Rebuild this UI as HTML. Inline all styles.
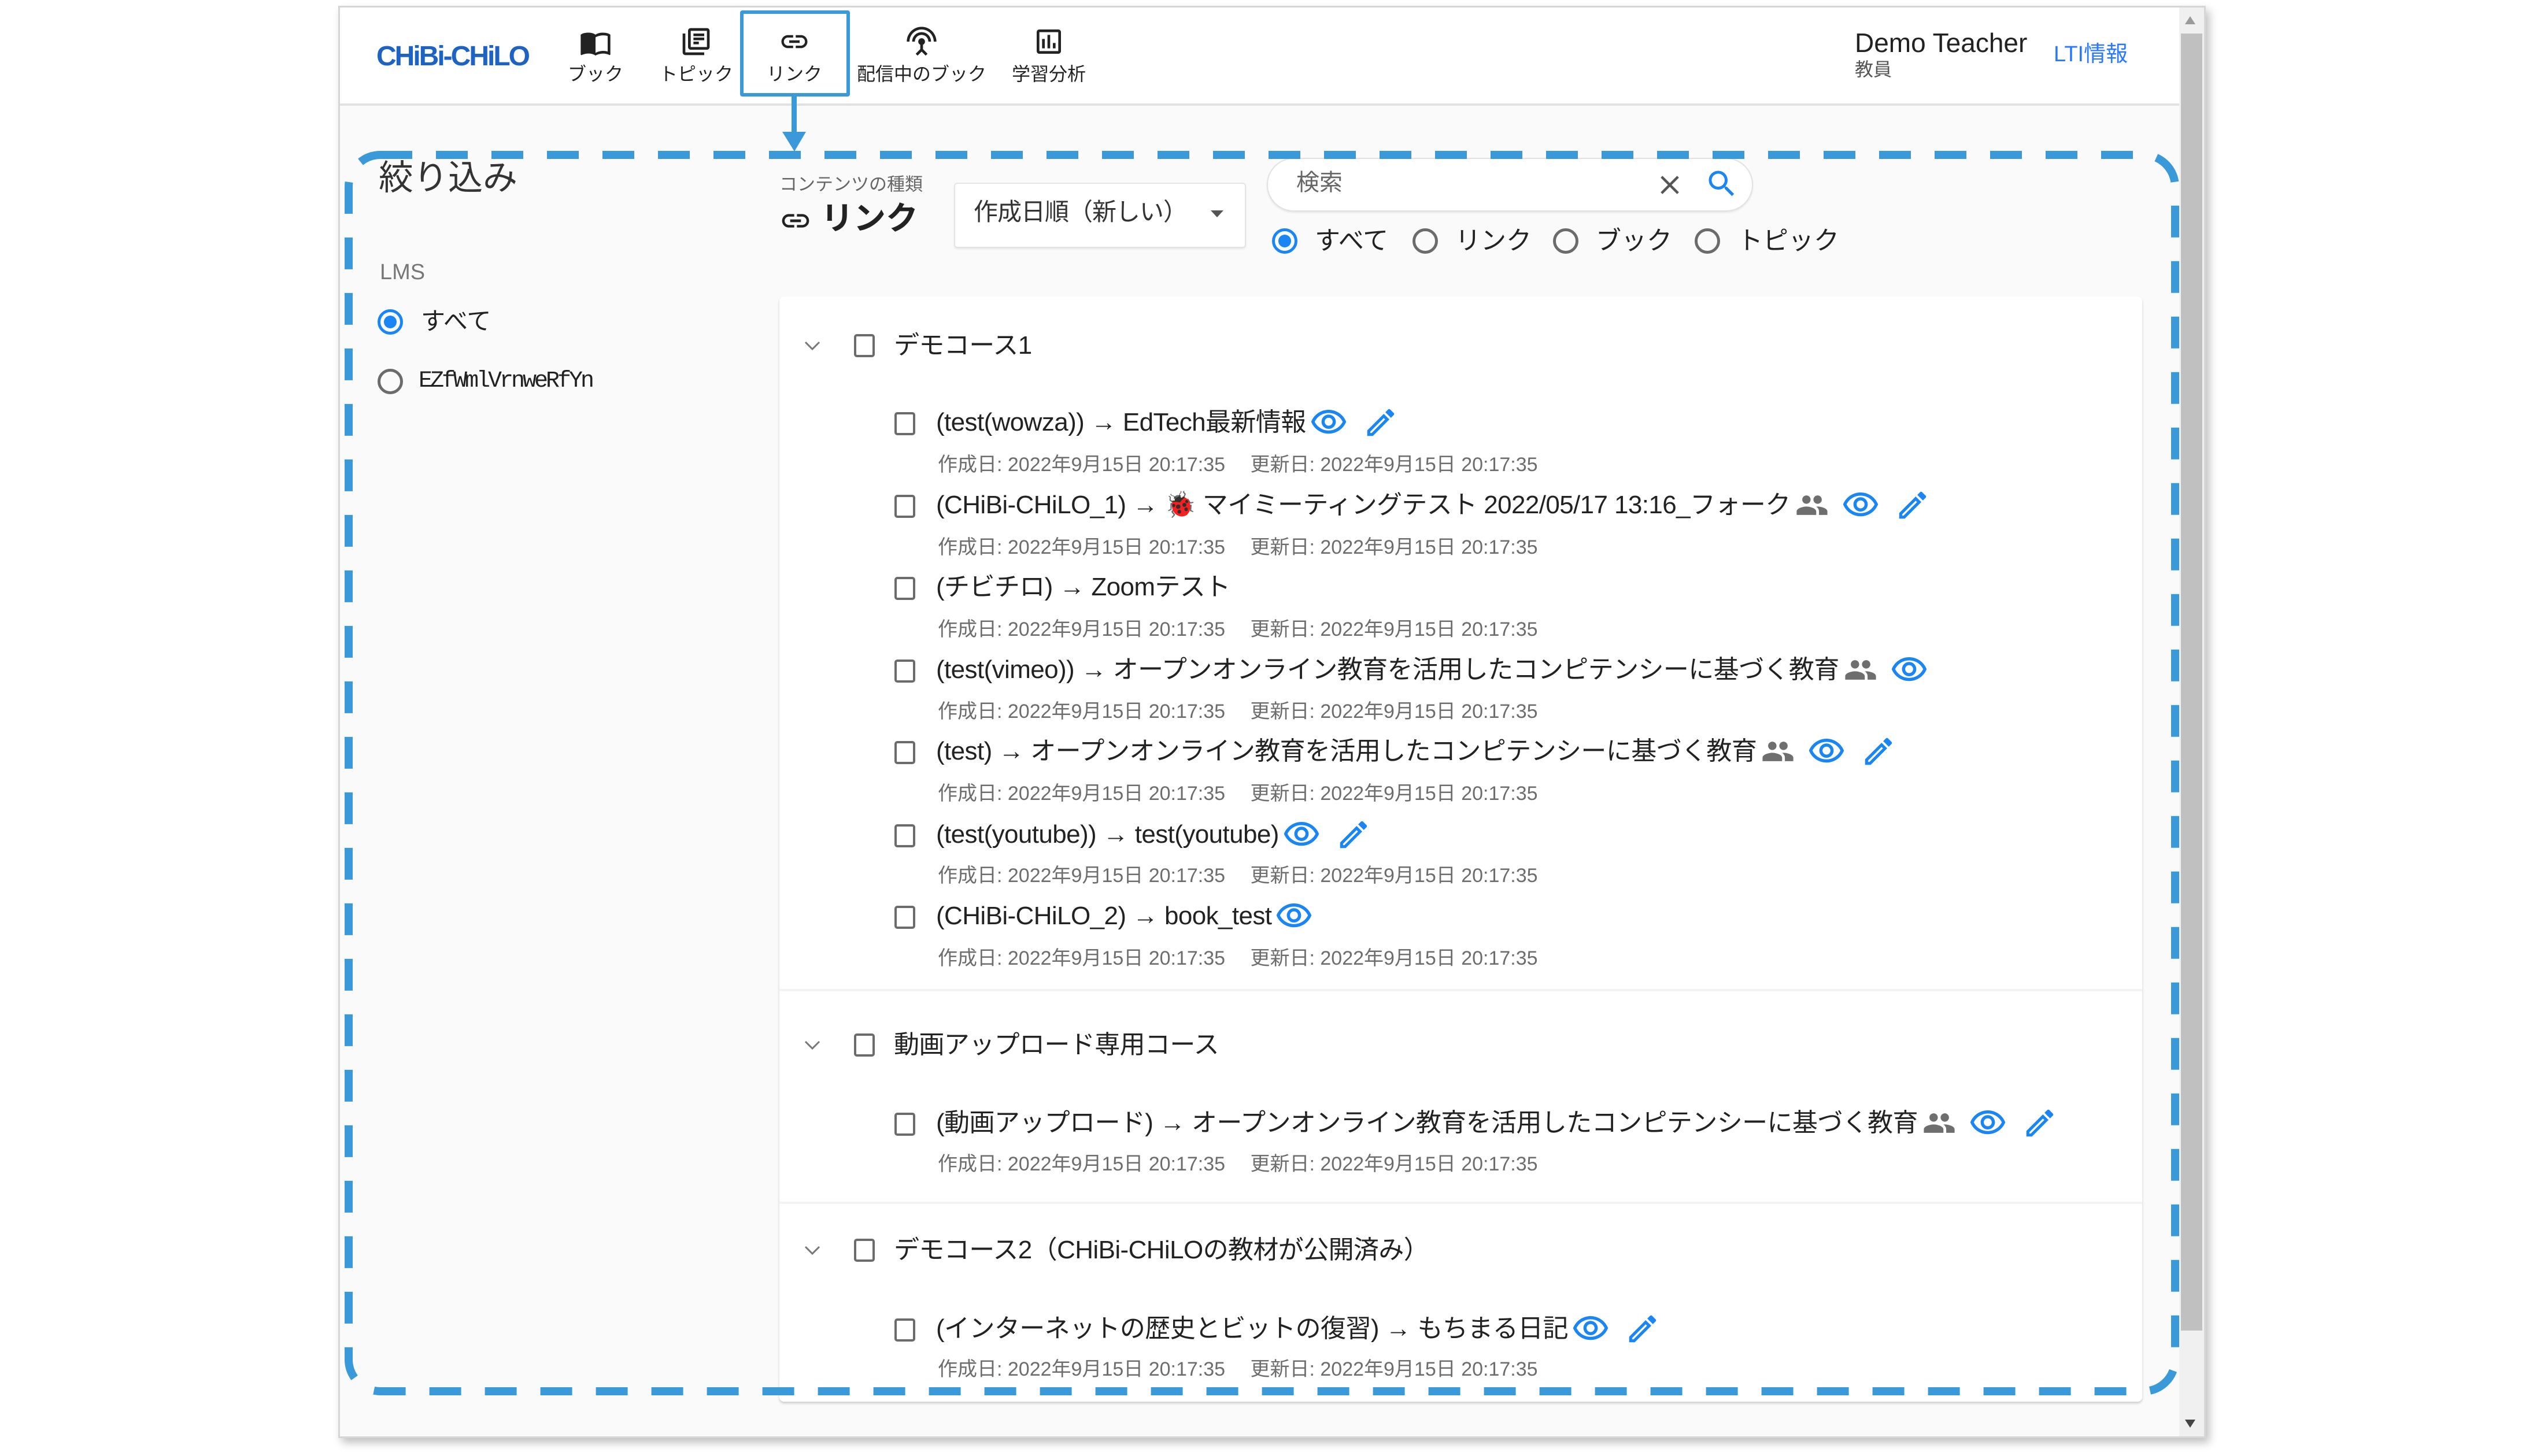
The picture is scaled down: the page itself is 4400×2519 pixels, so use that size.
<!DOCTYPE html>
<html><head><meta charset="utf-8">
<style>
*{margin:0;padding:0;box-sizing:border-box}
body{width:4400px;height:2519px;background:#fff;position:relative;overflow:hidden;font-family:"Liberation Sans","Noto Sans CJK JP",sans-serif;color:#222}
.a{position:absolute;white-space:nowrap}
.c{position:absolute;white-space:nowrap;line-height:1;transform:translateY(-50%)}
.cb{position:absolute;width:36px;height:40px;border:4px solid #6b6b6b;border-radius:5px;transform:translateY(-50%)}
.t{font-size:44px;color:#222;letter-spacing:-0.6px}
.row{display:flex;align-items:center}
.row svg{flex:none}
.m{font-size:34px;color:#6d6d6d}
.ic{position:absolute;transform:translate(-50%,-50%)}
.blue{fill:#1a86f5}
.gray{fill:#6e6e6e}
.g1{margin-left:8px}
.ge{margin-left:22px}
.ee{margin-left:6px}
.ep{margin-left:26px}
</style></head><body>

<div class="a" style="left:585px;top:10px;width:3230px;height:2478px;background:#fafafa;border:3px solid #d6d6d6;box-shadow:6px 8px 14px rgba(0,0,0,0.25)"></div>
<div class="a" style="left:588px;top:13px;width:3181px;height:170px;background:#fff;border-bottom:4px solid #e2e2e2"></div>
<div class="a" style="left:3769px;top:13px;width:43px;height:2472px;background:#f0f0f0"></div>
<div class="a" style="left:3772px;top:58px;width:37px;height:2244px;background:#c0c0c0"></div>
<div class="a" style="left:3779px;top:28px;width:0;height:0;border-left:9px solid transparent;border-right:9px solid transparent;border-bottom:14px solid #9a9a9a"></div>
<div class="a" style="left:3779px;top:2456px;width:0;height:0;border-left:9px solid transparent;border-right:9px solid transparent;border-top:14px solid #444"></div>

<div class="c" style="left:651px;top:98px;font-size:48px;font-weight:bold;color:#1c63c4;letter-spacing:-3px">CHiBi-CHiLO</div>

<svg class="ic" style="left:1030px;top:74px" width="56" height="56" viewBox="0 0 24 24"><path fill="#222" d="M21 5c-1.11-.35-2.33-.5-3.5-.5-1.950 0-4.05.4-5.5 1.5-1.45-1.1-3.55-1.5-5.5-1.5S2.45 4.9 1 6v14.65c0 .25.25.5.5.5.1 0 .15-.05.25-.05C3.1 20.45 5.05 20 6.5 20c1.95 0 4.05.4 5.5 1.5 1.35-.85 3.8-1.5 5.5-1.5 1.65 0 3.35.3 4.75 1.05.1.05.15.05.25.05.25 0 .5-.25.5-.5V6c-.6-.45-1.25-.75-2-1zm0 13.5c-1.1-.35-2.3-.5-3.5-.5-1.7 0-4.150.65-5.5 1.5V8c1.35-.85 3.8-1.5 5.5-1.5 1.2 0 2.4.15 3.5.5v11.5z"/></svg>
<div class="c" style="left:1030px;top:128px;font-size:32px;transform:translate(-50%,-50%)">ブック</div>
<svg class="ic" style="left:1204px;top:72px" width="56" height="56" viewBox="0 0 24 24"><path fill="#222" d="M4 6H2v14c0 1.1.9 2 2 2h14v-2H4V6zm16-4H8c-1.1 0-2 .9-2 2v12c0 1.1.9 2 2 2h12c1.1 0 2-.9 2-2V4c0-1.1-.9-2-2-2zm0 14H8V4h12v12zM10 9h8v2h-8zm0 3h4v2h-4zm0-6h8v2h-8z"/></svg>
<div class="c" style="left:1204px;top:128px;font-size:32px;transform:translate(-50%,-50%)">トピック</div>
<div class="a" style="left:1280px;top:18px;width:190px;height:149px;border:6px solid #3a9ad9;border-radius:4px;background:#fff"></div>
<svg class="ic" style="left:1374px;top:72px" width="54" height="54" viewBox="0 0 24 24"><path fill="#222" d="M3.9 12c0-1.71 1.39-3.1 3.1-3.1h4V7H7c-2.76 0-5 2.24-5 5s2.24 5 5 5h4v-1.9H7c-1.71 0-3.1-1.39-3.1-3.1zM8 13h8v-2H8v2zm9-6h-4v1.9h4c1.71 0 3.1 1.39 3.1 3.1s-1.39 3.1-3.1 3.1h-4V17h4c2.76 0 5-2.24 5-5s-2.24-5-5-5z"/></svg>
<div class="c" style="left:1374px;top:128px;font-size:32px;transform:translate(-50%,-50%)">リンク</div>
<svg class="ic" style="left:1594px;top:72px" width="56" height="56" viewBox="0 0 24 24"><path fill="#222" d="M12 5c-3.87 0-7 3.13-7 7h2c0-2.76 2.24-5 5-5s5 2.24 5 5h2c0-3.87-3.13-7-7-7zm1 9.29c.88-.39 1.5-1.26 1.5-2.29 0-1.38-1.12-2.5-2.5-2.5S9.5 10.62 9.5 12c0 1.02.62 1.9 1.5 2.29v3.3L7.59 21 9 22.41l3-3 3 3L16.41 21 13 17.59v-3.3zM12 1C5.930 1 1 5.93 1 12h2c0-4.97 4.03-9 9-9s9 4.03 9 9h2c0-6.07-4.93-11-11-11z"/></svg>
<div class="c" style="left:1594px;top:128px;font-size:32px;transform:translate(-50%,-50%)">配信中のブック</div>
<svg class="ic" style="left:1814px;top:72px" width="56" height="56" viewBox="0 0 24 24"><path fill="#222" d="M19 3H5c-1.1 0-2 .9-2 2v14c0 1.1.9 2 2 2h14c1.1 0 2-.9 2-2V5c0-1.1-.9-2-2-2zm0 16H5V5h14v14zM7 10h2v7H7zm4-3h2v10h-2zm4 6h2v4h-2z"/></svg>
<div class="c" style="left:1814px;top:128px;font-size:32px;transform:translate(-50%,-50%)">学習分析</div>

<div class="c" style="left:3208px;top:74px;font-size:46px;color:#222">Demo Teacher</div>
<div class="c" style="left:3208px;top:120px;font-size:32px;color:#555">教員</div>
<div class="c" style="left:3552px;top:94px;font-size:38px;color:#2979ff">LTI情報</div>

<div class="c" style="left:655px;top:308px;font-size:60px;color:#333">絞り込み</div>
<div class="c" style="left:657px;top:471px;font-size:38px;color:#777">LMS</div>
<div class="a" style="left:653px;top:535px;width:44px;height:44px;border:5px solid #1a86f5;border-radius:50%"></div>
<div class="a" style="left:664px;top:546px;width:22px;height:22px;background:#1a86f5;border-radius:50%"></div>
<div class="c" style="left:728px;top:556px;font-size:42px">すべて</div>
<div class="a" style="left:653px;top:638px;width:44px;height:44px;border:5px solid #6b6b6b;border-radius:50%"></div>
<div class="c" style="left:724px;top:660px;font-size:40px;font-family:'Liberation Mono',monospace;letter-spacing:-4px">EZfWmlVrnweRfYn</div>

<div class="c" style="left:1348px;top:319px;font-size:31px;color:#666">コンテンツの種類</div>
<svg class="ic" style="left:1376px;top:382px" width="56" height="56" viewBox="0 0 24 24"><path fill="#222" d="M3.9 12c0-1.71 1.39-3.1 3.1-3.1h4V7H7c-2.76 0-5 2.24-5 5s2.24 5 5 5h4v-1.9H7c-1.71 0-3.1-1.39-3.1-3.1zM8 13h8v-2H8v2zm9-6h-4v1.9h4c1.71 0 3.1 1.39 3.1 3.1s-1.39 3.1-3.1 3.1h-4V17h4c2.76 0 5-2.24 5-5s-2.24-5-5-5z"/></svg>
<div class="c" style="left:1420px;top:378px;font-size:56px;font-weight:bold;color:#222">リンク</div>

<div class="a" style="left:1650px;top:316px;width:505px;height:113px;background:#fff;border:2px solid #e4e4e4;border-radius:6px;box-shadow:0 2px 3px rgba(0,0,0,0.08)"></div>
<div class="c" style="left:1684px;top:367px;font-size:42px;color:#333;letter-spacing:-1px">作成日順（新しい）</div>
<div class="a" style="left:2094px;top:364px;width:0;height:0;border-left:11px solid transparent;border-right:11px solid transparent;border-top:12px solid #555"></div>

<div class="a" style="left:2191px;top:273px;width:841px;height:93px;background:#fff;border:2px solid #e2e2e2;border-radius:47px;box-shadow:0 2px 3px rgba(0,0,0,0.08)"></div>
<div class="c" style="left:2242px;top:316px;font-size:40px;color:#666">検索</div>
<svg class="ic" style="left:2888px;top:320px" width="54" height="54" viewBox="0 0 24 24"><path fill="#555" d="M19 6.41L17.590 5 12 10.59 6.41 5 5 6.41 10.59 12 5 17.59 6.41 19 12 13.41 17.59 19 19 17.59 13.41 12z"/></svg>
<svg class="ic" style="left:2978px;top:318px" width="60" height="60" viewBox="0 0 24 24"><path class="blue" d="M15.5 14h-.79l-.28-.27C15.41 12.59 16 11.11 16 9.5 16 5.91 13.09 3 9.5 3S3 5.91 3 9.5 5.91 16 9.5 16c1.61 0 3.09-.59 4.23-1.57l.27.28v.79l5 4.99L20.49 19l-4.99-5zm-6 0C7.01 14 5 11.99 5 9.5S7.01 5 9.5 5 14 7.01 14 9.5 11.99 14 9.5 14z"/></svg>

<div class="a" style="left:2200px;top:395px;width:44px;height:44px;border:5px solid #1a86f5;border-radius:50%"></div>
<div class="a" style="left:2211px;top:406px;width:22px;height:22px;background:#1a86f5;border-radius:50%"></div>
<div class="c" style="left:2274px;top:417px;font-size:44px">すべて</div>
<div class="a" style="left:2443px;top:395px;width:44px;height:44px;border:5px solid #6b6b6b;border-radius:50%"></div>
<div class="c" style="left:2517px;top:417px;font-size:44px">リンク</div>
<div class="a" style="left:2686px;top:395px;width:44px;height:44px;border:5px solid #6b6b6b;border-radius:50%"></div>
<div class="c" style="left:2760px;top:417px;font-size:44px">ブック</div>
<div class="a" style="left:2931px;top:395px;width:44px;height:44px;border:5px solid #6b6b6b;border-radius:50%"></div>
<div class="c" style="left:3005px;top:417px;font-size:44px">トピック</div>

<div class="a" style="left:1348px;top:513px;width:2357px;height:1912px;background:#fff;border-radius:8px;box-shadow:0 3px 4px rgba(0,0,0,0.18)"></div>
<div class="a" style="left:1348px;top:1711px;width:2357px;height:4px;background:#f3f3f3"></div>
<div class="a" style="left:1348px;top:2079px;width:2357px;height:4px;background:#f3f3f3"></div>

<svg width="0" height="0" style="position:absolute"><defs>
<symbol id="eye" viewBox="0 0 24 24"><path class="blue" d="M12 6c3.79 0 7.17 2.13 8.82 5.5C19.17 14.87 15.79 17 12 17s-7.17-2.13-8.82-5.5C4.83 8.13 8.21 6 12 6m0-2C7 4 2.73 7.11 1 11.5 2.73 15.89 7 19 12 19s9.27-3.11 11-7.5C21.27 7.11 17 4 12 4zm0 5c1.38 0 2.5 1.12 2.5 2.5S13.38 14 12 14s-2.5-1.12-2.5-2.5S10.62 9 12 9m0-2c-2.48 0-4.5 2.02-4.5 4.5S9.52 16 12 16s4.5-2.02 4.5-4.5S14.48 7 12 7z"/></symbol>
<symbol id="pen" viewBox="0 0 24 24"><path class="blue" d="M3 17.25V21h3.75L17.81 9.94l-3.75-3.75L3 17.25zM5.92 19H5v-.92l9.06-9.06.92.92L5.92 19zM20.71 5.63l-2.34-2.34c-.2-.2-.45-.29-.71-.29s-.51.1-.7.29l-1.83 1.83 3.75 3.75 1.83-1.83c.39-.39.39-1.02 0-1.41z"/></symbol>
<symbol id="ppl" viewBox="0 0 24 24"><path class="gray" d="M16 11c1.66 0 2.99-1.34 2.99-3S17.66 5 16 5c-1.66 0-3 1.34-3 3s1.34 3 3 3zm-8 0c1.66 0 2.99-1.34 2.99-3S9.66 5 8 5C6.34 5 5 6.34 5 8s1.34 3 3 3zm0 2c-2.33 0-7 1.17-7 3.5V19h14v-2.5c0-2.33-4.67-3.5-7-3.5zm8 0c-.29 0-.62.02-.97.05 1.16.84 1.97 1.97 1.97 3.45V19h6v-2.5c0-2.33-4.67-3.5-7-3.5z"/></symbol>
<symbol id="chev" viewBox="0 0 30 20"><path d="M3 4l12 12 12-12" fill="none" stroke="#777" stroke-width="3"/></symbol>
</defs></svg>

<svg class="ic" style="left:1405px;top:598px" width="30" height="20"><use href="#chev"/></svg>
<div class="cb" style="left:1477px;top:598px"></div>
<div class="c t" style="left:1546px;top:598px">デモコース1</div>

<svg class="ic" style="left:1405px;top:1808px" width="30" height="20"><use href="#chev"/></svg>
<div class="cb" style="left:1477px;top:1808px"></div>
<div class="c t" style="left:1546px;top:1808px">動画アップロード専用コース</div>

<svg class="ic" style="left:1405px;top:2163px" width="30" height="20"><use href="#chev"/></svg>
<div class="cb" style="left:1477px;top:2163px"></div>
<div class="c t" style="left:1546px;top:2163px">デモコース2（CHiBi-CHiLOの教材が公開済み）</div>

<!-- items -->
<div class="cb" style="left:1547px;top:733px"></div>
<div class="c t row" style="left:1619px;top:731px"><span>(test(wowza)) → EdTech最新情報</span><svg class="ee" width="66" height="66"><use href="#eye"/></svg><svg class="ep" width="62" height="62"><use href="#pen"/></svg></div>
<div class="c m" style="left:1622px;top:804px">作成日: 2022年9月15日 20:17:35　 更新日: 2022年9月15日 20:17:35</div>

<div class="cb" style="left:1547px;top:876px"></div>
<div class="c t row" style="left:1619px;top:874px"><span>(CHiBi-CHiLO_1) → 🐞 マイミーティングテスト 2022/05/17 13:16_フォーク</span><svg class="g1" width="58" height="58"><use href="#ppl"/></svg><svg class="ge" width="66" height="66"><use href="#eye"/></svg><svg class="ep" width="62" height="62"><use href="#pen"/></svg></div>
<div class="c m" style="left:1622px;top:947px">作成日: 2022年9月15日 20:17:35　 更新日: 2022年9月15日 20:17:35</div>

<div class="cb" style="left:1547px;top:1018px"></div>
<div class="c t" style="left:1619px;top:1016px">(チビチロ) → Zoomテスト</div>
<div class="c m" style="left:1622px;top:1089px">作成日: 2022年9月15日 20:17:35　 更新日: 2022年9月15日 20:17:35</div>

<div class="cb" style="left:1547px;top:1161px"></div>
<div class="c t row" style="left:1619px;top:1159px"><span>(test(vimeo)) → オープンオンライン教育を活用したコンピテンシーに基づく教育</span><svg class="g1" width="58" height="58"><use href="#ppl"/></svg><svg class="ge" width="66" height="66"><use href="#eye"/></svg></div>
<div class="c m" style="left:1622px;top:1231px">作成日: 2022年9月15日 20:17:35　 更新日: 2022年9月15日 20:17:35</div>

<div class="cb" style="left:1547px;top:1302px"></div>
<div class="c t row" style="left:1619px;top:1300px"><span>(test) → オープンオンライン教育を活用したコンピテンシーに基づく教育</span><svg class="g1" width="58" height="58"><use href="#ppl"/></svg><svg class="ge" width="66" height="66"><use href="#eye"/></svg><svg class="ep" width="62" height="62"><use href="#pen"/></svg></div>
<div class="c m" style="left:1622px;top:1373px">作成日: 2022年9月15日 20:17:35　 更新日: 2022年9月15日 20:17:35</div>

<div class="cb" style="left:1547px;top:1446px"></div>
<div class="c t row" style="left:1619px;top:1444px"><span>(test(youtube)) → test(youtube)</span><svg class="ee" width="66" height="66"><use href="#eye"/></svg><svg class="ep" width="62" height="62"><use href="#pen"/></svg></div>
<div class="c m" style="left:1622px;top:1515px">作成日: 2022年9月15日 20:17:35　 更新日: 2022年9月15日 20:17:35</div>

<div class="cb" style="left:1547px;top:1587px"></div>
<div class="c t row" style="left:1619px;top:1585px"><span>(CHiBi-CHiLO_2) → book_test</span><svg class="ee" width="66" height="66"><use href="#eye"/></svg></div>
<div class="c m" style="left:1622px;top:1658px">作成日: 2022年9月15日 20:17:35　 更新日: 2022年9月15日 20:17:35</div>

<div class="cb" style="left:1547px;top:1945px"></div>
<div class="c t row" style="left:1619px;top:1943px"><span>(動画アップロード) → オープンオンライン教育を活用したコンピテンシーに基づく教育</span><svg class="g1" width="58" height="58"><use href="#ppl"/></svg><svg class="ge" width="66" height="66"><use href="#eye"/></svg><svg class="ep" width="62" height="62"><use href="#pen"/></svg></div>
<div class="c m" style="left:1622px;top:2014px">作成日: 2022年9月15日 20:17:35　 更新日: 2022年9月15日 20:17:35</div>

<div class="cb" style="left:1547px;top:2301px"></div>
<div class="c t row" style="left:1619px;top:2299px"><span>(インターネットの歴史とビットの復習) → もちまる日記</span><svg class="ee" width="66" height="66"><use href="#eye"/></svg><svg class="ep" width="62" height="62"><use href="#pen"/></svg></div>
<div class="c m" style="left:1622px;top:2369px">作成日: 2022年9月15日 20:17:35　 更新日: 2022年9月15日 20:17:35</div>

<svg class="a" style="left:0;top:0" width="4400" height="2519">
<rect x="603" y="268" width="3159" height="2139" rx="55" ry="55" fill="none" stroke="#3a9ad9" stroke-width="14" stroke-dasharray="55 41"/>
<rect x="1369" y="167" width="9" height="66" fill="#3a9ad9"/>
<path d="M1353 228 L1394 228 L1374 262 Z" fill="#3a9ad9"/>
</svg>
</body></html>
